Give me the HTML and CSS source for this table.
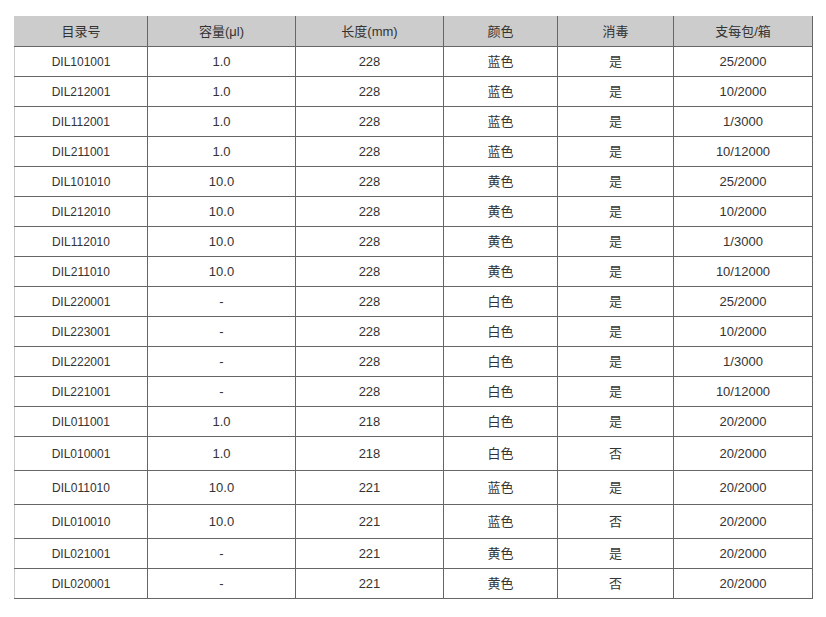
FILE: index.html
```html
<!DOCTYPE html>
<html lang="zh">
<head>
<meta charset="utf-8">
<title>产品规格</title>
<link rel="stylesheet" href="styles.css">
</head>
<body>
<div class="wrap">
<table class="spec">
<colgroup>
<col class="c1"><col class="c2"><col class="c3"><col class="c4"><col class="c5"><col class="c6">
</colgroup>
<thead>
<tr><th>目录号</th><th>容量(μl)</th><th>长度(mm)</th><th>颜色</th><th>消毒</th><th>支每包/箱</th></tr>
</thead>
<tbody>
<tr><td class="id">DIL101001</td><td>1.0</td><td>228</td><td>蓝色</td><td>是</td><td>25/2000</td></tr>
<tr><td class="id">DIL212001</td><td>1.0</td><td>228</td><td>蓝色</td><td>是</td><td>10/2000</td></tr>
<tr><td class="id">DIL112001</td><td>1.0</td><td>228</td><td>蓝色</td><td>是</td><td>1/3000</td></tr>
<tr><td class="id">DIL211001</td><td>1.0</td><td>228</td><td>蓝色</td><td>是</td><td>10/12000</td></tr>
<tr><td class="id">DIL101010</td><td>10.0</td><td>228</td><td>黄色</td><td>是</td><td>25/2000</td></tr>
<tr><td class="id">DIL212010</td><td>10.0</td><td>228</td><td>黄色</td><td>是</td><td>10/2000</td></tr>
<tr><td class="id">DIL112010</td><td>10.0</td><td>228</td><td>黄色</td><td>是</td><td>1/3000</td></tr>
<tr><td class="id">DIL211010</td><td>10.0</td><td>228</td><td>黄色</td><td>是</td><td>10/12000</td></tr>
<tr><td class="id">DIL220001</td><td>-</td><td>228</td><td>白色</td><td>是</td><td>25/2000</td></tr>
<tr><td class="id">DIL223001</td><td>-</td><td>228</td><td>白色</td><td>是</td><td>10/2000</td></tr>
<tr><td class="id">DIL222001</td><td>-</td><td>228</td><td>白色</td><td>是</td><td>1/3000</td></tr>
<tr><td class="id">DIL221001</td><td>-</td><td>228</td><td>白色</td><td>是</td><td>10/12000</td></tr>
<tr><td class="id">DIL011001</td><td>1.0</td><td>218</td><td>白色</td><td>是</td><td>20/2000</td></tr>
<tr class="tall"><td class="id">DIL010001</td><td>1.0</td><td>218</td><td>白色</td><td>否</td><td>20/2000</td></tr>
<tr class="tall"><td class="id">DIL011010</td><td>10.0</td><td>221</td><td>蓝色</td><td>是</td><td>20/2000</td></tr>
<tr class="tall"><td class="id">DIL010010</td><td>10.0</td><td>221</td><td>蓝色</td><td>否</td><td>20/2000</td></tr>
<tr><td class="id">DIL021001</td><td>-</td><td>221</td><td>黄色</td><td>是</td><td>20/2000</td></tr>
<tr><td class="id">DIL020001</td><td>-</td><td>221</td><td>黄色</td><td>否</td><td>20/2000</td></tr>
</tbody>
</table>
</div>
</body>
</html>
```
FILE: styles.css
```css
html, body {
  margin: 0;
  padding: 0;
  background: #fff;
}
.wrap {
  padding: 16px 14px;
}
.spec {
  border-collapse: collapse;
  table-layout: fixed;
  width: 799px;
  font-family: "Liberation Sans", "Noto Sans CJK SC", sans-serif;
  font-size: 13px;
  line-height: 1;
  color: #333;
}
.c1 { width: 133px; }
.c2 { width: 148px; }
.c3 { width: 148px; }
.c4 { width: 114px; }
.c5 { width: 116px; }
.c6 { width: 139px; }
.spec th,
.spec td {
  border: 1px solid #666;
  padding: 0;
  text-align: center;
  vertical-align: middle;
  font-weight: normal;
}
.spec thead tr {
  height: 30px;
  background: #ccc;
}
.spec th {
  border-top-color: #ccc;
}
.spec th:first-child {
  border-left-color: #ccc;
}
.spec td:first-child {
  border-left-color: #ccc;
}
.spec tbody tr {
  height: 30px;
}
.spec tbody tr.tall {
  height: 34px;
}
.spec td.id {
  font-size: 12px;
}
```
